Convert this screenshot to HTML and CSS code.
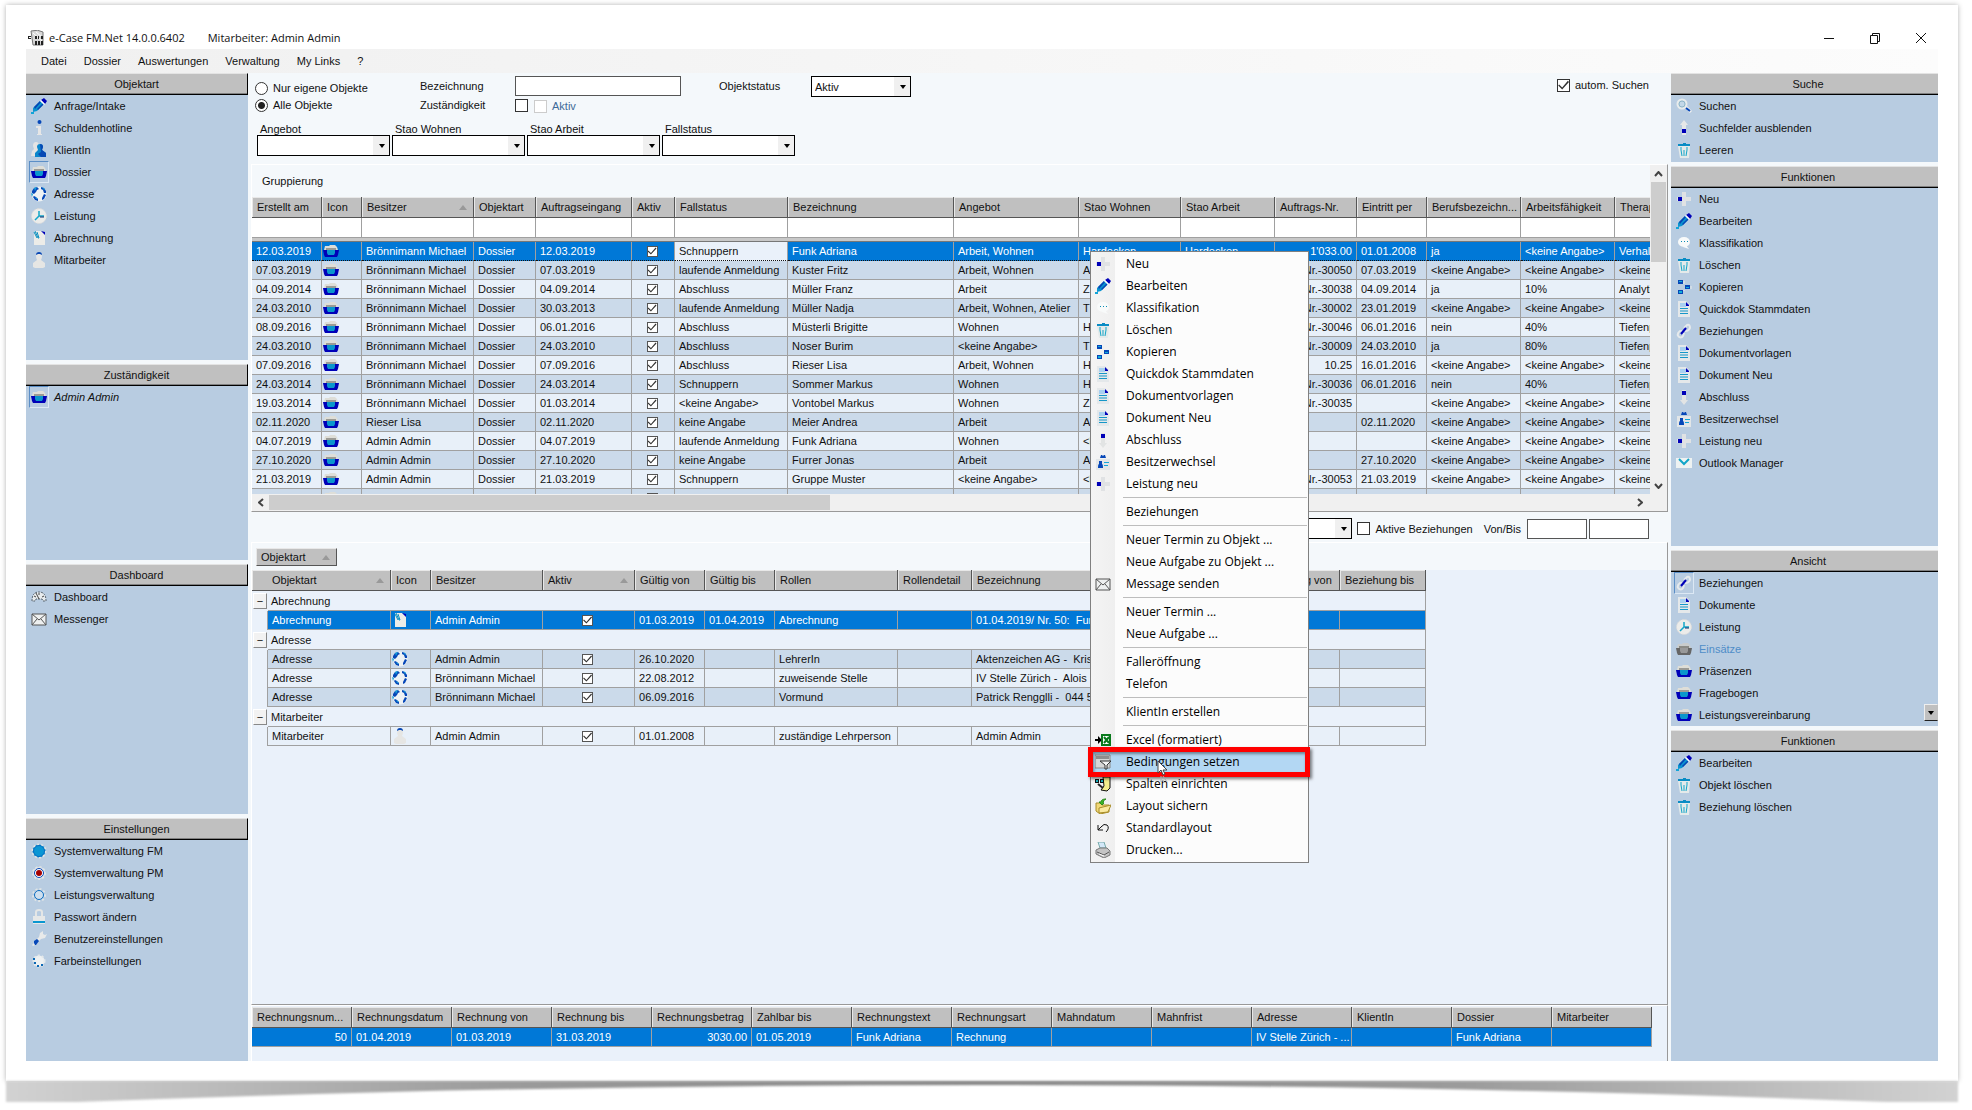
FILE: index.html
```html
<!DOCTYPE html>
<html lang="de">
<head>
<meta charset="utf-8">
<title>e-Case FM.Net</title>
<link rel="stylesheet" href="styles.css">
</head>
<body>
<svg class="sprite" aria-hidden="true">
  <symbol id="pencil" viewBox="0 0 16 16"><path d="M2 10 9 3l4 3-7 7-4 1z" fill="#0a94d0"/><path d="M3 9 9 3l1 1-6 7zM7 12l6-6-1-1-6 6z" fill="#0646b4"/><path d="M10 2l3-2 3 3-2 3z" fill="#0000b8"/><path d="M9 3l1-1 4 4-1 1z" fill="#fff"/><path d="M0 14h3v2H0z" fill="#12a5d8"/></symbol>
  <symbol id="info" viewBox="0 0 16 16"><circle cx="8.500" cy="2" r="2" fill="#0647b8"/><path d="M5 6h5v8h1v1H6v-1h1V8H5z" fill="#e6e6e6"/></symbol>
  <symbol id="client" viewBox="0 0 16 16"><path d="M2 4q0-4 3-4t3 4l-1 4 2 6H0l1-5 2-2z" fill="#e4e4e4"/><path d="M6 5q0-3 3-3t3 3l-1 3 4 3v4H4v-4l3-3z" fill="#0a86cc"/><path d="M9 2q3 0 3 3l-1 3 4 3v4h-5l-3-3 3-2z" fill="#0648b4"/></symbol>
  <symbol id="folder" viewBox="0 0 16 16"><path d="M1 7l1-4h4l1-1h5l2 2 1 3z" fill="#deded8"/><path d="M3 5h10v3H3z" fill="#9b9b96"/><path d="M0 7h16l-1 5-1 2H2l-1-2z" fill="#0000b8"/><path d="M4 7h8v3l-1 2H5l-1-2z" fill="#0a96cc"/></symbol>
  <symbol id="folder-off" viewBox="0 0 16 16"><path d="M1 7l1-4h4l1-1h5l2 2 1 3z" fill="#c9cccc"/><path d="M3 5h10v3H3z" fill="#8b8b86"/><path d="M0 7h16l-1 5-1 2H2l-1-2z" fill="#666"/><path d="M4 7h8v3l-1 2H5l-1-2z" fill="#999"/></symbol>
  <symbol id="globe" viewBox="0 0 16 16"><circle cx="8" cy="8" r="7.500" fill="#eef2f4"/><path d="M1 5l2-3 3-1 2 2-2 1-1 2-2 2-2-1zM10 1l3 1 2 3 0 2-2 0-1-3-2-1zM3 10l2 1 2 2 0 2-3-1-2-3zM13 8l2 1-2 4-2 1 0-2z" fill="#0647b8"/><path d="M3 2l3-1-2 4zM11 1l3 2-1 1zM4 11l3 2-2 0zM0 7l2 1-1 3z" fill="#12a0d8"/></symbol>
  <symbol id="clock" viewBox="0 0 16 16"><circle cx="8" cy="8" r="7.500" fill="#ececea" stroke="#dadada" stroke-dasharray="2 1"/><path d="M8 3v5h5M8 8l-4 4" fill="none" stroke="#12a5c8" stroke-width="1.500"/><path d="M9 9h4" stroke="#0b2a70"/></symbol>
  <symbol id="bill" viewBox="0 0 16 16"><path d="M3 1h7l4 3v11H3z" fill="#ecece8"/><path d="M10 1l4 1v3z" fill="#0000b8"/><path d="M4 1l3 7 1 0-2-6M3 2l3 6" fill="none" stroke="#0a8fc0"/></symbol>
  <symbol id="person" viewBox="0 0 16 16"><path d="M5 4q0-4 3-4t3 4q0 2-1 4l4 3v4l-2 1H4l-2-1v-4l4-3q-1-2-1-4z" fill="#e6e6e4"/><path d="M5 3q0-3 3-3t3 3L9 2H7z" fill="#0646b4"/></symbol>
  <symbol id="gauge" viewBox="0 0 16 16"><path d="M1 12q0-9 7-9t7 9h-3l-1-2H5l-1 2z" fill="#e8ecee" stroke="#53606c" stroke-dasharray="2 1"/><path d="M8 10L5 4M8 4v2M3 7l2 1M13 7l-2 1" stroke="#444" fill="none"/></symbol>
  <symbol id="mail" viewBox="0 0 16 16"><path d="M1 3h14v11H1z" fill="#eef0f0" stroke="#555"/><path d="M1 3l7 6 7-6M1 14l5-6M15 14l-5-6" fill="none" stroke="#555"/></symbol>
  <symbol id="gear" viewBox="0 0 16 16"><circle cx="8" cy="8" r="6.500" fill="#0a96d4" stroke="#e0e4e4" stroke-width="2" stroke-dasharray="2 2"/><circle cx="8" cy="8" r="5.500" fill="#0a96d4" stroke="#0a6cc0"/></symbol>
  <symbol id="gear-red" viewBox="0 0 16 16"><circle cx="8" cy="8" r="6" fill="#e4e8ea" stroke="#e0e4e4" stroke-width="2" stroke-dasharray="2 2"/><circle cx="8" cy="8" r="4.500" fill="#fff" stroke="#0647b8"/><circle cx="8" cy="8" r="3" fill="#a40000"/></symbol>
  <symbol id="gear-ring" viewBox="0 0 16 16"><circle cx="8" cy="8" r="6" fill="none" stroke="#dfe4e6" stroke-width="2" stroke-dasharray="2 2"/><circle cx="8" cy="8" r="4.500" fill="#cfdfee" stroke="#0b6cc0"/></symbol>
  <symbol id="lock" viewBox="0 0 16 16"><path d="M5 7V3q0-2 3-2t3 2v4" fill="none" stroke="#e4e6e6" stroke-width="2"/><path d="M2 7h12v8H2z" fill="#e6e8e8"/><path d="M2 12h12v2H2z" fill="#0a96d0"/></symbol>
  <symbol id="wrench" viewBox="0 0 16 16"><path d="M8 6l1-4 3-2 0 3 2 1 2-1-2 4-4 1-2 2-2-2z" fill="#e8eaea"/><path d="M3 10l3-2 2 2-3 4H3z" fill="#0647b8"/><path d="M1 14l2-2 1 2-2 1z" fill="#e8eaea"/></symbol>
  <symbol id="colors" viewBox="0 0 16 16"><circle cx="8" cy="8" r="5.500" fill="#eef1f2" stroke="#e4e8ea" stroke-width="2" stroke-dasharray="2 2"/><path d="M2 5h2v2H2zM3 9h2v2H3zM6 12h2v2H6zM10 11h2v2h-2z" fill="#0b68b4"/></symbol>
  <symbol id="search" viewBox="0 0 16 16"><circle cx="6" cy="6" r="4.500" fill="#c3d8e8" stroke="#e8ecec" stroke-width="2"/><circle cx="6" cy="6" r="3" fill="none" stroke="#8fb6c8"/><path d="M10 9l5 5" stroke="#eee" stroke-width="3"/><path d="M10 10l4 3" stroke="#0647b8" stroke-width="2"/></symbol>
  <symbol id="up" viewBox="0 0 16 16"><path d="M8 0l4 5h-2v10H6V5H4z" fill="#e6e8e8"/><path d="M6 9h4v4H6z" fill="#0000b8"/></symbol>
  <symbol id="down" viewBox="0 0 16 16"><path d="M8 16l4-5h-2V1H6v10H4z" fill="#e2e4e4"/><path d="M6 2h4v4H6z" fill="#0000b8"/></symbol>
  <symbol id="trash" viewBox="0 0 16 16"><path d="M2 4h12l-1 12H4z" fill="#e4eaea"/><path d="M2 2h12v2H2zM7 1h3v1H7z" fill="#0a8cc4"/><path d="M5 5v3l1 6M8 8v6M11 5v3l-1 6" fill="none" stroke="#12a5c8"/></symbol>
  <symbol id="plus" viewBox="0 0 16 16"><path d="M6 1h4v5h5v4h-5v5H6v-5H1V6h5z" fill="#e0e2e4"/><path d="M2 6h4v4H2z" fill="#0000b8"/></symbol>
  <symbol id="chat" viewBox="0 0 16 16"><ellipse cx="8" cy="7" rx="6" ry="5" fill="#f8fafa"/><path d="M10 10l3 4-6-2z" fill="#f8fafa"/><path d="M5 6h1v1H5zM8 6h1v1H8zM11 6h1v1h-1z" fill="#0a8cb4"/></symbol>
  <symbol id="copy" viewBox="0 0 16 16"><path d="M2 1h5v4H2zM2 11h5v4H2zM9 6h5v4H9z" fill="#0647b8"/><path d="M3 2h3v1H3zM3 12h3v2H3zM10 8h3v1h-3z" fill="#12b0d8"/><path d="M8 2v3M8 12v-1M15 7v3" stroke="#e8ecec"/></symbol>
  <symbol id="doc" viewBox="0 0 16 16"><path d="M2 0h8l4 4v12H2z" fill="#e4e8ea"/><path d="M4 2h6v4H4z" fill="#a8d0f0"/><path d="M10 1l3 3v1h-3z" fill="#0000b8"/><path d="M4 7.500h8M4 10h8M4 12.500h8" stroke="#1597c8"/></symbol>
  <symbol id="link" viewBox="0 0 16 16"><path d="M2 13q-1-3 2-5l2 0M9 8q4 0 5-3 0-4-3-3L8 5M2 13q3 3 5 0l1-3" fill="none" stroke="#e6eaec" stroke-width="2"/><path d="M5 11l5-6" stroke="#0000b8" stroke-width="2"/></symbol>
  <symbol id="badge" viewBox="0 0 16 16"><path d="M1 5h14v11H1z" fill="#e2e6e8"/><path d="M5 4l1-3h1l1 1 1-1h1l1 3zM3 13q0-3 1-3v-3h3v3q1 0 1 3v1H3z" fill="#0647b8"/><path d="M9 8h5v1H9zM9 11h4v1H9z" fill="#12a5d8"/></symbol>
  <symbol id="outlook" viewBox="0 0 16 16"><path d="M0 3h16v10H0z" fill="#eef2f2"/><path d="M3 4l5 5 5-5" fill="none" stroke="#12a5c8" stroke-width="2"/></symbol>
  <symbol id="excel" viewBox="0 0 16 16"><path d="M0 7h3V4l4 4-4 4V9H0z" fill="#000"/><path d="M7 3h8v10H7z" fill="#fff" stroke="#0a7a1c" stroke-width="2"/><path d="M9 5l5 6M14 5l-5 6" stroke="#0a7a1c" stroke-width="2"/></symbol>
  <symbol id="filter" viewBox="0 0 16 16"><path d="M0 1h15v13H0z" fill="#d6d6d6" stroke="#888"/><path d="M1 2h13v3H1z" fill="#8e8e8e"/><path d="M5 7h11l-4 4v4h-2v-4z" fill="#f4f4f4" stroke="#333"/></symbol>
  <symbol id="columns" viewBox="0 0 16 16"><path d="M8 1h7v11l-3 3-6-1 3-4z" fill="#f3ee8c" stroke="#111"/><path d="M0 3h4v4H0zM5 3h4v4H5z" fill="#111"/><path d="M1 4h2v2H1zM6 4h2v2H6z" fill="#19b4c4"/><path d="M3 8l5 4" stroke="#222" stroke-width="2"/></symbol>
  <symbol id="save" viewBox="0 0 16 16"><path d="M1 5h5l1 2h7v7l-9 2-4-3z" fill="#f0d878" stroke="#a88c28"/><path d="M4 10l12-3-3 7-9 1z" fill="#fbeaa0" stroke="#a88c28"/><path d="M4 4l3 3 2-2-1 0q0-3 3-4-5 0-5 3z" fill="#3cb828" stroke="#2a8c1c"/></symbol>
  <symbol id="undo" viewBox="0 0 16 16"><path d="M3 5v5h5M3 10l4-4" fill="none" stroke="#111"/><path d="M6 7q3-4 6-2 3 3-1 7" fill="none" stroke="#111"/></symbol>
  <symbol id="print" viewBox="0 0 16 16"><path d="M3 0h6l2 6H5z" fill="#d4e8f8" stroke="#7aa"/><path d="M1 8l4-2h7l3 3v4l-6 3-8-4z" fill="#c4c4c4" stroke="#777"/><path d="M2 10l7 3 5-3" fill="none" stroke="#555"/><path d="M4 12l5 2" stroke="#fff"/></symbol>
  <symbol id="app" viewBox="0 0 16 16"><path d="M3 1q7-2 12 1v13H5z" fill="#d8d8d8" stroke="#777"/><path d="M8 2l6 5M5 3l9 8" stroke="#fff"/><path d="M0 6h3v1H1v1h2v1H0zM4 8h2M7 6h2v3H7zM10 6h1v3h-1zM13 6h2v3h-2zM7 11h2v4H7zM10 11h2v4h-2zM13 11h2v4h-2z" fill="#222"/></symbol>
</svg>

<main class="paper">
  <header class="titlebar">
    <svg class="ic"><use href="#app"/></svg>
    <span class="app-name">e-Case FM.Net 14.0.0.6402</span>
    <span>Mitarbeiter: Admin Admin</span>
    <div class="winbtns">
      <button type="button" aria-label="Minimieren"><svg viewBox="0 0 12 12"><path d="M1 6.500h10"/></svg></button>
      <button type="button" aria-label="Verkleinern"><svg viewBox="0 0 12 12"><path d="M1.500 3.500h7v8h-7zM3.500 3.500v-2h7v8h-2"/></svg></button>
      <button type="button" aria-label="Schliessen"><svg viewBox="0 0 12 12"><path d="M1 1l10 10M11 1L1 11"/></svg></button>
    </div>
  </header>
  <nav class="menubar">
    <button type="button">Datei</button><button type="button">Dossier</button><button type="button">Auswertungen</button><button type="button">Verwaltung</button><button type="button">My Links</button><button type="button">?</button>
  </nav>

  <div class="workspace">
    <aside class="side side-left">
      <section class="panel">
        <h2>Objektart</h2>
        <button type="button"><svg class="ic"><use href="#pencil"/></svg>Anfrage/Intake</button>
        <button type="button"><svg class="ic"><use href="#info"/></svg>Schuldenhotline</button>
        <button type="button"><svg class="ic"><use href="#client"/></svg>KlientIn</button>
        <button type="button" class="current"><svg class="ic"><use href="#folder"/></svg>Dossier</button>
        <button type="button"><svg class="ic"><use href="#globe"/></svg>Adresse</button>
        <button type="button"><svg class="ic"><use href="#clock"/></svg>Leistung</button>
        <button type="button"><svg class="ic"><use href="#bill"/></svg>Abrechnung</button>
        <button type="button"><svg class="ic"><use href="#person"/></svg>Mitarbeiter</button>
      </section>
      <section class="panel">
        <h2>Zuständigkeit</h2>
        <button type="button" class="current"><svg class="ic"><use href="#folder"/></svg><em>Admin Admin</em></button>
      </section>
      <section class="panel">
        <h2>Dashboard</h2>
        <button type="button"><svg class="ic"><use href="#gauge"/></svg>Dashboard</button>
        <button type="button"><svg class="ic"><use href="#mail"/></svg>Messenger</button>
      </section>
      <section class="panel">
        <h2>Einstellungen</h2>
        <button type="button"><svg class="ic"><use href="#gear"/></svg>Systemverwaltung FM</button>
        <button type="button"><svg class="ic"><use href="#gear-red"/></svg>Systemverwaltung PM</button>
        <button type="button"><svg class="ic"><use href="#gear-ring"/></svg>Leistungsverwaltung</button>
        <button type="button"><svg class="ic"><use href="#lock"/></svg>Passwort ändern</button>
        <button type="button"><svg class="ic"><use href="#wrench"/></svg>Benutzereinstellungen</button>
        <button type="button"><svg class="ic"><use href="#colors"/></svg>Farbeinstellungen</button>
      </section>
    </aside>

    <div class="center">
      <form class="filters">
        <div class="filter-top">
          <div class="stack owner">
            <label><input type="radio" name="own">Nur eigene Objekte</label>
            <label><input type="radio" name="own" checked>Alle Objekte</label>
          </div>
          <div class="stack names">
            <label for="bez">Bezeichnung</label>
            <label for="zust">Zuständigkeit</label>
          </div>
          <div class="stack values">
            <input type="text" id="bez">
            <div class="checks"><input type="checkbox" id="zust"><label class="off"><input type="checkbox" disabled>Aktiv</label></div>
          </div>
          <label class="status" for="status">Objektstatus</label>
          <span class="sel sel-status"><select id="status"><option>Aktiv</option></select></span>
          <label class="auto"><input type="checkbox" checked>autom. Suchen</label>
        </div>
        <div class="filter-bottom">
          <div><label for="f1">Angebot</label><span class="sel"><select id="f1"><option></option></select></span></div>
          <div><label for="f2">Stao Wohnen</label><span class="sel"><select id="f2"><option></option></select></span></div>
          <div><label for="f3">Stao Arbeit</label><span class="sel"><select id="f3"><option></option></select></span></div>
          <div><label for="f4">Fallstatus</label><span class="sel"><select id="f4"><option></option></select></span></div>
        </div>
      </form>

      <section class="list main-list">
        <div class="list-body">
          <div class="grouping">Gruppierung</div>
          <table class="grid cases">
            <thead>
              <tr><th>Erstellt am</th><th>Icon</th><th class="sorted">Besitzer</th><th>Objektart</th><th>Auftragseingang</th><th>Aktiv</th><th>Fallstatus</th><th>Bezeichnung</th><th>Angebot</th><th>Stao Wohnen</th><th>Stao Arbeit</th><th>Auftrags-Nr.</th><th>Eintritt per</th><th>Berufsbezeichn...</th><th>Arbeitsfähigkeit</th><th>Therapie</th></tr>
              <tr class="search"><td></td><td></td><td></td><td></td><td></td><td></td><td></td><td></td><td></td><td></td><td></td><td></td><td></td><td></td><td></td><td></td></tr>
              <tr class="divider"><td colspan="16"></td></tr>
            </thead>
            <tbody>
              <tr class="selected"><td>12.03.2019</td><td class="pic"><svg class="ic"><use href="#folder"/></svg></td><td>Brönnimann Michael</td><td>Dossier</td><td>12.03.2019</td><td class="mid"><input type="checkbox" aria-label="Aktiv" checked></td><td class="focus">Schnuppern</td><td>Funk Adriana</td><td>Arbeit, Wohnen</td><td>Hardecken</td><td>Hardecken</td><td class="num">1'033.00</td><td>01.01.2008</td><td>ja</td><td>&lt;keine Angabe&gt;</td><td>Verhaltens</td></tr>
              <tr><td>07.03.2019</td><td class="pic"><svg class="ic"><use href="#folder"/></svg></td><td>Brönnimann Michael</td><td>Dossier</td><td>07.03.2019</td><td class="mid"><input type="checkbox" aria-label="Aktiv" checked></td><td>laufende Anmeldung</td><td>Kuster Fritz</td><td>Arbeit, Wohnen</td><td>A</td><td></td><td class="num">Nr.-30050</td><td>07.03.2019</td><td>&lt;keine Angabe&gt;</td><td>&lt;keine Angabe&gt;</td><td>&lt;keine Angabe&gt;</td></tr>
              <tr><td>04.09.2014</td><td class="pic"><svg class="ic"><use href="#folder"/></svg></td><td>Brönnimann Michael</td><td>Dossier</td><td>04.09.2014</td><td class="mid"><input type="checkbox" aria-label="Aktiv" checked></td><td>Abschluss</td><td>Müller Franz</td><td>Arbeit</td><td>Z</td><td></td><td class="num">Nr.-30038</td><td>04.09.2014</td><td>ja</td><td>10%</td><td>Analytisch</td></tr>
              <tr><td>24.03.2010</td><td class="pic"><svg class="ic"><use href="#folder"/></svg></td><td>Brönnimann Michael</td><td>Dossier</td><td>30.03.2013</td><td class="mid"><input type="checkbox" aria-label="Aktiv" checked></td><td>laufende Anmeldung</td><td>Müller Nadja</td><td>Arbeit, Wohnen, Atelier</td><td>T</td><td></td><td class="num">Nr.-30002</td><td>23.01.2019</td><td>&lt;keine Angabe&gt;</td><td>&lt;keine Angabe&gt;</td><td>&lt;keine Angabe&gt;</td></tr>
              <tr><td>08.09.2016</td><td class="pic"><svg class="ic"><use href="#folder"/></svg></td><td>Brönnimann Michael</td><td>Dossier</td><td>06.01.2016</td><td class="mid"><input type="checkbox" aria-label="Aktiv" checked></td><td>Abschluss</td><td>Müsterli Brigitte</td><td>Wohnen</td><td>H</td><td></td><td class="num">Nr.-30046</td><td>06.01.2016</td><td>nein</td><td>40%</td><td>Tiefenpsych</td></tr>
              <tr><td>24.03.2010</td><td class="pic"><svg class="ic"><use href="#folder"/></svg></td><td>Brönnimann Michael</td><td>Dossier</td><td>24.03.2010</td><td class="mid"><input type="checkbox" aria-label="Aktiv" checked></td><td>Abschluss</td><td>Noser Burim</td><td>&lt;keine Angabe&gt;</td><td>T</td><td></td><td class="num">Nr.-30009</td><td>24.03.2010</td><td>ja</td><td>80%</td><td>Tiefenpsych</td></tr>
              <tr><td>07.09.2016</td><td class="pic"><svg class="ic"><use href="#folder"/></svg></td><td>Brönnimann Michael</td><td>Dossier</td><td>07.09.2016</td><td class="mid"><input type="checkbox" aria-label="Aktiv" checked></td><td>Abschluss</td><td>Rieser Lisa</td><td>Arbeit, Wohnen</td><td>H</td><td></td><td class="num">10.25</td><td>16.01.2016</td><td>&lt;keine Angabe&gt;</td><td>&lt;keine Angabe&gt;</td><td>&lt;keine Angabe&gt;</td></tr>
              <tr><td>24.03.2014</td><td class="pic"><svg class="ic"><use href="#folder"/></svg></td><td>Brönnimann Michael</td><td>Dossier</td><td>24.03.2014</td><td class="mid"><input type="checkbox" aria-label="Aktiv" checked></td><td>Schnuppern</td><td>Sommer Markus</td><td>Wohnen</td><td>H</td><td></td><td class="num">Nr.-30036</td><td>06.01.2016</td><td>nein</td><td>40%</td><td>Tiefenpsych</td></tr>
              <tr><td>19.03.2014</td><td class="pic"><svg class="ic"><use href="#folder"/></svg></td><td>Brönnimann Michael</td><td>Dossier</td><td>01.03.2014</td><td class="mid"><input type="checkbox" aria-label="Aktiv" checked></td><td>&lt;keine Angabe&gt;</td><td>Vontobel Markus</td><td>Wohnen</td><td>Z</td><td></td><td class="num">Nr.-30035</td><td></td><td>&lt;keine Angabe&gt;</td><td>&lt;keine Angabe&gt;</td><td>&lt;keine Angabe&gt;</td></tr>
              <tr><td>02.11.2020</td><td class="pic"><svg class="ic"><use href="#folder"/></svg></td><td>Rieser Lisa</td><td>Dossier</td><td>02.11.2020</td><td class="mid"><input type="checkbox" aria-label="Aktiv" checked></td><td>keine Angabe</td><td>Meier Andrea</td><td>Arbeit</td><td>A</td><td></td><td></td><td>02.11.2020</td><td>&lt;keine Angabe&gt;</td><td>&lt;keine Angabe&gt;</td><td>&lt;keine Angabe&gt;</td></tr>
              <tr><td>04.07.2019</td><td class="pic"><svg class="ic"><use href="#folder"/></svg></td><td>Admin Admin</td><td>Dossier</td><td>04.07.2019</td><td class="mid"><input type="checkbox" aria-label="Aktiv" checked></td><td>laufende Anmeldung</td><td>Funk Adriana</td><td>Wohnen</td><td>&lt;k</td><td></td><td></td><td></td><td>&lt;keine Angabe&gt;</td><td>&lt;keine Angabe&gt;</td><td>&lt;keine Angabe&gt;</td></tr>
              <tr><td>27.10.2020</td><td class="pic"><svg class="ic"><use href="#folder"/></svg></td><td>Admin Admin</td><td>Dossier</td><td>27.10.2020</td><td class="mid"><input type="checkbox" aria-label="Aktiv" checked></td><td>keine Angabe</td><td>Furrer Jonas</td><td>Arbeit</td><td>A</td><td></td><td></td><td>27.10.2020</td><td>&lt;keine Angabe&gt;</td><td>&lt;keine Angabe&gt;</td><td>&lt;keine Angabe&gt;</td></tr>
              <tr><td>21.03.2019</td><td class="pic"><svg class="ic"><use href="#folder"/></svg></td><td>Admin Admin</td><td>Dossier</td><td>21.03.2019</td><td class="mid"><input type="checkbox" aria-label="Aktiv" checked></td><td>Schnuppern</td><td>Gruppe Muster</td><td>&lt;keine Angabe&gt;</td><td>&lt;k</td><td></td><td class="num">Nr.-30053</td><td>21.03.2019</td><td>&lt;keine Angabe&gt;</td><td>&lt;keine Angabe&gt;</td><td>&lt;keine Angabe&gt;</td></tr>
              <tr><td>07.03.2019</td><td class="pic"><svg class="ic"><use href="#folder"/></svg></td><td>Admin Admin</td><td>Dossier</td><td>07.03.2019</td><td class="mid"><input type="checkbox" aria-label="Aktiv" checked></td><td>laufende Anmeldung</td><td>Kunger Fridolin</td><td>Wohnen</td><td>A</td><td></td><td class="num">Nr.-30033</td><td></td><td>&lt;keine Angabe&gt;</td><td>&lt;keine Angabe&gt;</td><td>&lt;keine Angabe&gt;</td></tr>
            </tbody>
          </table>
        </div>
        <div class="vbar"><svg viewBox="0 0 9 6"><path d="M1 5l3.500-4L8 5"/></svg><i></i><svg viewBox="0 0 9 6"><path d="M1 1l3.500 4L8 1"/></svg></div>
        <div class="hbar"><svg viewBox="0 0 6 9"><path d="M5 1L1 4.500 5 8"/></svg><i></i><svg viewBox="0 0 6 9"><path d="M1 1l4 3.500L1 8"/></svg></div>
      </section>

      <div class="relbar">
        <span class="sel"><select aria-label="Rolle"><option></option></select></span>
        <label><input type="checkbox">Aktive Beziehungen</label>
        <label class="range" for="von">Von/Bis</label>
        <input type="text" id="von"><input type="text" aria-label="Bis">
      </div>

      <section class="list rel-list">
        <div class="chips"><button type="button">Objektart</button></div>
        <table class="grid relations">
          <colgroup><col><col><col><col><col><col><col><col><col><col><col><col></colgroup>
          <thead><tr><th colspan="2" class="sorted first">Objektart</th><th>Icon</th><th>Besitzer</th><th class="sorted">Aktiv</th><th>Gültig von</th><th>Gültig bis</th><th>Rollen</th><th>Rollendetail</th><th>Bezeichnung</th><th>Beziehung von</th><th>Beziehung bis</th></tr></thead>
          <tbody>
            <tr class="group"><td class="exp"><button type="button">−</button></td><td colspan="11">Abrechnung</td></tr>
            <tr class="selected"><td class="exp"></td><td>Abrechnung</td><td class="pic"><svg class="ic"><use href="#bill"/></svg></td><td>Admin Admin</td><td class="mid"><input type="checkbox" aria-label="Aktiv" checked></td><td>01.03.2019</td><td>01.04.2019</td><td>Abrechnung</td><td></td><td>01.04.2019/ Nr. 50:&nbsp; Funk Adriana</td><td></td><td></td></tr>
            <tr class="group"><td class="exp"><button type="button">−</button></td><td colspan="11">Adresse</td></tr>
            <tr class="alt"><td class="exp"></td><td>Adresse</td><td class="pic"><svg class="ic"><use href="#globe"/></svg></td><td>Admin Admin</td><td class="mid"><input type="checkbox" aria-label="Aktiv" checked></td><td>26.10.2020</td><td></td><td>LehrerIn</td><td></td><td>Aktenzeichen AG -&nbsp; Krist</td><td></td><td></td></tr>
            <tr><td class="exp"></td><td>Adresse</td><td class="pic"><svg class="ic"><use href="#globe"/></svg></td><td>Brönnimann Michael</td><td class="mid"><input type="checkbox" aria-label="Aktiv" checked></td><td>22.08.2012</td><td></td><td>zuweisende Stelle</td><td></td><td>IV Stelle Zürich -&nbsp; Alois B</td><td></td><td></td></tr>
            <tr class="alt"><td class="exp"></td><td>Adresse</td><td class="pic"><svg class="ic"><use href="#globe"/></svg></td><td>Brönnimann Michael</td><td class="mid"><input type="checkbox" aria-label="Aktiv" checked></td><td>06.09.2016</td><td></td><td>Vormund</td><td></td><td>Patrick Rengglli -&nbsp; 044 54</td><td></td><td></td></tr>
            <tr class="group"><td class="exp"><button type="button">−</button></td><td colspan="11">Mitarbeiter</td></tr>
            <tr><td class="exp"></td><td>Mitarbeiter</td><td class="pic"><svg class="ic"><use href="#person"/></svg></td><td>Admin Admin</td><td class="mid"><input type="checkbox" aria-label="Aktiv" checked></td><td>01.01.2008</td><td></td><td>zuständige Lehrperson</td><td></td><td>Admin Admin</td><td></td><td></td></tr>
          </tbody>
        </table>
      </section>

      <section class="list bill-list">
        <table class="grid bills">
          <thead><tr><th>Rechnungsnum...</th><th>Rechnungsdatum</th><th>Rechnung von</th><th>Rechnung bis</th><th>Rechnungsbetrag</th><th>Zahlbar bis</th><th>Rechnungstext</th><th>Rechnungsart</th><th>Mahndatum</th><th>Mahnfrist</th><th>Adresse</th><th>KlientIn</th><th>Dossier</th><th>Mitarbeiter</th></tr></thead>
          <tbody><tr class="selected"><td class="num">50</td><td>01.04.2019</td><td>01.03.2019</td><td>31.03.2019</td><td class="num">3030.00</td><td>01.05.2019</td><td>Funk Adriana</td><td>Rechnung</td><td></td><td></td><td>IV Stelle Zürich - ...</td><td></td><td>Funk Adriana</td><td></td></tr></tbody>
        </table>
      </section>

      <div class="context">
        <button type="button"><svg class="ic"><use href="#plus"/></svg>Neu</button>
        <button type="button"><svg class="ic"><use href="#pencil"/></svg>Bearbeiten</button>
        <button type="button"><svg class="ic"><use href="#chat"/></svg>Klassifikation</button>
        <button type="button"><svg class="ic"><use href="#trash"/></svg>Löschen</button>
        <button type="button"><svg class="ic"><use href="#copy"/></svg>Kopieren</button>
        <button type="button"><svg class="ic"><use href="#doc"/></svg>Quickdok Stammdaten</button>
        <button type="button"><svg class="ic"><use href="#doc"/></svg>Dokumentvorlagen</button>
        <button type="button"><svg class="ic"><use href="#doc"/></svg>Dokument Neu</button>
        <button type="button"><svg class="ic"><use href="#down"/></svg>Abschluss</button>
        <button type="button"><svg class="ic"><use href="#badge"/></svg>Besitzerwechsel</button>
        <button type="button"><svg class="ic"><use href="#plus"/></svg>Leistung neu</button>
        <hr>
        <button type="button"><svg class="ic"></svg>Beziehungen</button>
        <hr>
        <button type="button"><svg class="ic"></svg>Neuer Termin zu Objekt ...</button>
        <button type="button"><svg class="ic"></svg>Neue Aufgabe zu Objekt ...</button>
        <button type="button"><svg class="ic"><use href="#mail"/></svg>Message senden</button>
        <hr>
        <button type="button"><svg class="ic"></svg>Neuer Termin ...</button>
        <button type="button"><svg class="ic"></svg>Neue Aufgabe ...</button>
        <hr>
        <button type="button"><svg class="ic"></svg>Falleröffnung</button>
        <button type="button"><svg class="ic"></svg>Telefon</button>
        <hr>
        <button type="button"><svg class="ic"></svg>KlientIn erstellen</button>
        <hr>
        <button type="button"><svg class="ic"><use href="#excel"/></svg>Excel (formatiert)</button>
        <button type="button" class="hot"><svg class="ic"><use href="#filter"/></svg>Bedingungen setzen
          <svg class="cursor" viewBox="0 0 12 24"><path d="M1 1v12l3-3 2 5 2-1-2-4h4z" fill="#fff" stroke="#444"/><path d="M4 16v6l2-2 1 3M6 16l4 6" fill="none" stroke="#aaa"/></svg></button>
        <button type="button"><svg class="ic"><use href="#columns"/></svg>Spalten einrichten</button>
        <button type="button"><svg class="ic"><use href="#save"/></svg>Layout sichern</button>
        <button type="button"><svg class="ic"><use href="#undo"/></svg>Standardlayout</button>
        <button type="button"><svg class="ic"><use href="#print"/></svg>Drucken...</button>
      </div>
    </div>

    <aside class="side side-right">
      <section class="panel">
        <h2>Suche</h2>
        <button type="button"><svg class="ic"><use href="#search"/></svg>Suchen</button>
        <button type="button"><svg class="ic"><use href="#up"/></svg>Suchfelder ausblenden</button>
        <button type="button"><svg class="ic"><use href="#trash"/></svg>Leeren</button>
      </section>
      <section class="panel">
        <h2>Funktionen</h2>
        <button type="button"><svg class="ic"><use href="#plus"/></svg>Neu</button>
        <button type="button"><svg class="ic"><use href="#pencil"/></svg>Bearbeiten</button>
        <button type="button"><svg class="ic"><use href="#chat"/></svg>Klassifikation</button>
        <button type="button"><svg class="ic"><use href="#trash"/></svg>Löschen</button>
        <button type="button"><svg class="ic"><use href="#copy"/></svg>Kopieren</button>
        <button type="button"><svg class="ic"><use href="#doc"/></svg>Quickdok Stammdaten</button>
        <button type="button"><svg class="ic"><use href="#link"/></svg>Beziehungen</button>
        <button type="button"><svg class="ic"><use href="#doc"/></svg>Dokumentvorlagen</button>
        <button type="button"><svg class="ic"><use href="#doc"/></svg>Dokument Neu</button>
        <button type="button"><svg class="ic"><use href="#down"/></svg>Abschluss</button>
        <button type="button"><svg class="ic"><use href="#badge"/></svg>Besitzerwechsel</button>
        <button type="button"><svg class="ic"><use href="#plus"/></svg>Leistung neu</button>
        <button type="button"><svg class="ic"><use href="#outlook"/></svg>Outlook Manager</button>
      </section>
      <section class="panel">
        <h2>Ansicht</h2>
        <button type="button" class="current"><svg class="ic"><use href="#link"/></svg>Beziehungen</button>
        <button type="button"><svg class="ic"><use href="#doc"/></svg>Dokumente</button>
        <button type="button"><svg class="ic"><use href="#clock"/></svg>Leistung</button>
        <button type="button" disabled><svg class="ic"><use href="#folder-off"/></svg>Einsätze</button>
        <button type="button"><svg class="ic"><use href="#folder"/></svg>Präsenzen</button>
        <button type="button"><svg class="ic"><use href="#folder"/></svg>Fragebogen</button>
        <button type="button"><svg class="ic"><use href="#folder"/></svg>Leistungsvereinbarung</button>
        <button type="button" class="more" aria-label="Mehr"></button>
      </section>
      <section class="panel">
        <h2>Funktionen</h2>
        <button type="button"><svg class="ic"><use href="#pencil"/></svg>Bearbeiten</button>
        <button type="button"><svg class="ic"><use href="#trash"/></svg>Objekt löschen</button>
        <button type="button"><svg class="ic"><use href="#trash"/></svg>Beziehung löschen</button>
      </section>
    </aside>
  </div>
</main>
<svg class="curl" viewBox="0 0 1952 29" preserveAspectRatio="none" aria-hidden="true">
  <defs><linearGradient id="fade"><stop offset="0" stop-color="#d2d2d2"/><stop offset=".25" stop-color="#9c9c9c"/><stop offset=".5" stop-color="#858585"/><stop offset=".75" stop-color="#9c9c9c"/><stop offset="1" stop-color="#d2d2d2"/></linearGradient></defs>
  <path d="M0-6H1952V21H1880Q1450 4 976 4T72 21H0z" fill="url(#fade)"/>
</svg>
</body>
</html>
```
FILE: styles.css
```css
* { box-sizing: border-box; }
body {
  margin: 0;
  padding: 5px 14px 0 6px;
  background: #fff;
  color: #111;
  font: 11px/14px "Liberation Sans", Arial, sans-serif;
}
button, input, select { font: inherit; color: inherit; margin: 0; }
button { border: 0; padding: 0; background: none; text-align: left; }
.sprite { display: none; }
.ic { flex: none; width: 16px; height: 16px; display: block; }

.paper {
  position: relative;
  display: flex;
  flex-direction: column;
  height: calc(100vh - 34px);
  min-height: 900px;
  padding: 15px 20px 20px;
  background: #fff;
  box-shadow: 0 0 5px rgba(0, 0, 0, .3);
}
.curl { display: block; width: 100%; height: 29px; filter: blur(1px); }

/* window frame */
.titlebar {
  display: flex;
  align-items: center;
  height: 29px;
  padding: 6px 0 0 2px;
  gap: 5px;
  font: 11px/16px "Open Sans", "Noto Sans", sans-serif;
}
.app-name { margin-right: 18px; }
.winbtns { display: flex; gap: 34px; margin-left: auto; padding-right: 11px; }
.winbtns svg { display: block; width: 12px; height: 12px; fill: none; stroke: #111; }
.menubar {
  display: flex;
  align-items: center;
  gap: 17px;
  height: 24px;
  padding-left: 15px;
  background: linear-gradient(90deg, #f0f0f0, #fcfcfc);
}
.workspace {
  flex: 1;
  min-height: 0;
  display: grid;
  grid-template-columns: 222px minmax(0, 1fr) 267px;
  gap: 3px;
  background: #f4f8fb;
}

/* side panels */
.side { display: grid; gap: 4px; min-height: 0; }
.side-left { grid-template-rows: 287fr 196fr 250fr 243fr; }
.side-right { grid-template-rows: 89fr 380fr 176fr 331fr; }
.panel { position: relative; background: #b8cce1; min-height: 0; overflow: hidden; }
.panel h2 {
  height: 22px;
  margin: 0;
  background: #c0c0c0;
  border-top: 1px solid #e3e3e3;
  border-bottom: 1px solid #000;
  box-shadow: inset 0 -1px #808080;
  font-size: 11px;
  font-weight: normal;
  line-height: 20px;
  text-align: center;
}
.side-left h2 { border-right: 1px solid #000; }
.side-right h2 { padding-left: 7px; }
.panel button {
  display: flex;
  align-items: center;
  gap: 5px;
  width: 100%;
  height: 22px;
  padding-left: 3px;
}
.panel .ic { width: 20px; height: 22px; padding: 2px; }
.panel .current .ic { border: 1px solid; border-color: #5b8ec6 #dce8f4 #dce8f4 #5b8ec6; padding: 2px 1px; }
.panel button:disabled { color: #4f8cc8; }
.panel .more {
  position: absolute;
  right: 0;
  bottom: 5px;
  width: 14px;
  height: 17px;
  padding: 0;
  justify-content: center;
  background: #c0c0c0;
  border: 1px solid;
  border-color: #eee transparent #222 #eee;
}
.more::after, .sel::after {
  content: "";
  border: 3px solid transparent;
  border-top: 4px solid #000;
  border-bottom: 0;
}

/* form controls */
input[type=text] { height: 20px; border: 1px solid #555; background: #fff; padding: 0 3px; border-radius: 0; }
input[type=checkbox], input[type=radio] {
  appearance: none;
  flex: none;
  width: 13px;
  height: 13px;
  background: #fff;
  border: 1px solid #333;
}
input[type=radio] { border-radius: 50%; }
input[type=radio]:checked { background: radial-gradient(circle, #222 3px, #fff 4px); }
input[type=checkbox]:disabled { border-color: #ccc; }
input[type=checkbox]:checked::before {
  content: "";
  display: block;
  width: 11px;
  height: 11px;
  background: #333;
  clip-path: polygon(10% 45%, 38% 72%, 90% 12%, 100% 22%, 38% 90%, 2% 55%);
}
.sel { position: relative; display: block; height: 21px; }
.sel select {
  appearance: none;
  display: block;
  width: 100%;
  height: 100%;
  padding: 0 20px 0 3px;
  border: 1px solid #000;
  border-radius: 0;
  background: linear-gradient(#f0f0f0, #f0f0f0) right / 16px 100% no-repeat #fff;
}
.sel::after { position: absolute; right: 5px; top: 9px; }

/* search area */
.center {
  position: relative;
  display: grid;
  grid-template-rows: 91px minmax(0, 348fr) 30px minmax(0, 463fr) 56px;
  min-height: 0;
}
.filters { display: flex; flex-direction: column; justify-content: space-between; padding: 3px 19px 8px 6px; }
.filter-top { display: flex; align-items: flex-start; }
.filter-top label { display: flex; align-items: center; gap: 5px; }
.stack { display: flex; flex-direction: column; gap: 3px; }
.owner { width: 165px; margin-left: -2px; padding-top: 5px; }
.names { width: 95px; padding-top: 3px; gap: 5px; }
.values { width: 204px; }
.values input[type=text] { width: 166px; }
.checks { display: flex; gap: 6px; }
.off { color: #3d6a98; }
.filter-top .status { width: 92px; padding-top: 3px; }
.sel-status { width: 100px; }
.filter-top .auto { margin-left: auto; padding-top: 2px; }
.filter-bottom { display: flex; gap: 2px; }
.filter-bottom div { width: 133px; }
.filter-bottom label { display: block; height: 13px; padding-left: 3px; }

/* lists */
.list { border-right: 1px solid #999; border-top: 1px solid #fff; border-left: 1px solid #fff; min-height: 0; overflow: hidden; }
.main-list { display: grid; grid-template: minmax(0, 1fr) 17px / minmax(0, 1fr) 17px; border-bottom: 1px solid #999; }
.list-body { overflow: hidden; }
.grouping { height: 32px; padding-left: 10px; line-height: 32px; }
.vbar, .hbar { display: flex; align-items: center; justify-content: space-between; background: #f0f0f0; }
.vbar { flex-direction: column; padding: 6px 0 5px; }
.vbar i { width: 15px; height: 80px; margin: 5px 0 auto; background: #cdcdcd; }
.hbar { grid-column: 1 / -1; padding: 0 24px 0 6px; }
.hbar i { width: 561px; height: 15px; margin: 0 auto 0 5px; background: #cdcdcd; }
.vbar svg { width: 9px; height: 6px; }
.hbar svg { width: 6px; height: 9px; }
.vbar svg, .hbar svg { fill: none; stroke: #444; stroke-width: 2; }

.grid { table-layout: fixed; border-spacing: 0; width: 1px; }
.grid th, .grid td { padding: 0 0 0 4px; overflow: hidden; white-space: nowrap; text-align: left; font-weight: normal; }
.grid th {
  height: 21px;
  background: #c0c0c0;
  border-right: 1px solid #555;
  border-bottom: 1px solid #555;
  box-shadow: inset 1px 1px #e8e8e8;
  padding-left: 5px;
}
.grid th.first { padding-left: 20px; }
.chips button { background: #c0c0c0; }
.sorted::after, .chips button::after {
  content: "";
  float: right;
  margin: 5px 6px 0 0;
  border: 4px solid transparent;
  border-bottom: 5px solid #999;
  border-top: 0;
}
.grid td { height: 19px; line-height: 16px; background: #e8f0f9; border-right: 1px solid #a0a0a0; border-bottom: 1px solid #a0a0a0; }
.cases tbody tr:nth-child(even) td, .grid .alt td { background: #cbdaea; }
.grid .search td { height: 20px; background: #fff; }
.grid .divider td { height: 4px; background: #c8c8c8; border: 0; border-bottom: 1px solid #777; }
.grid .selected td { background: #0078d7; color: #fff; }
.cases .selected td { border-bottom: 1px dotted #111; }
.grid .selected td.focus { background: #eaf1fa; color: #111; }
.grid td.num { text-align: right; padding-right: 4px; }
.grid td.pic { padding-left: 1px; }
.grid td.mid { text-align: center; padding: 0 2px 0 0; }
.grid td.mid input { display: block; width: 11px; height: 11px; margin: 0 auto; border-color: #555; color: #111; }
.grid td.mid input::before { width: 9px; height: 9px; }

.cases th:nth-child(1) { width: 70px; }
.cases th:nth-child(2) { width: 40px; }
.cases th:nth-child(3) { width: 112px; }
.cases th:nth-child(4) { width: 62px; }
.cases th:nth-child(5) { width: 96px; }
.cases th:nth-child(6) { width: 43px; }
.cases th:nth-child(7) { width: 113px; }
.cases th:nth-child(8) { width: 166px; }
.cases th:nth-child(9) { width: 125px; }
.cases th:nth-child(10) { width: 102px; }
.cases th:nth-child(11) { width: 94px; }
.cases th:nth-child(12) { width: 82px; }
.cases th:nth-child(13) { width: 70px; }
.cases th:nth-child(14), .cases th:nth-child(15), .cases th:nth-child(16) { width: 94px; }

.relbar { display: flex; align-items: center; justify-content: flex-end; gap: 2px; padding: 3px 19px 0 0; }
.relbar .sel { width: 133px; }
.relbar label { display: flex; align-items: center; gap: 5px; padding: 0 6px 0 3px; }
.relbar .range { padding-right: 4px; }
.relbar input[type=text] { width: 60px; }

.rel-list { background: #eaf1fa; border-bottom: 1px solid #999; }
.chips { height: 27px; padding: 5px 4px; background: #f4f8fb; }
.chips button { width: 81px; height: 18px; padding-left: 4px; border: 1px solid; border-color: #e8e8e8 #555 #555 #e8e8e8; }
.relations col:nth-child(1) { width: 16px; }
.relations col:nth-child(2), .relations col:nth-child(8) { width: 123px; }
.relations col:nth-child(3) { width: 40px; }
.relations col:nth-child(4) { width: 112px; }
.relations col:nth-child(5) { width: 92px; }
.relations col:nth-child(6), .relations col:nth-child(7) { width: 70px; }
.relations col:nth-child(9) { width: 74px; }
.relations col:nth-child(10) { width: 282px; }
.relations col:nth-child(11), .relations col:nth-child(12) { width: 86px; }
.relations .group td { height: 20px; background: #eaf1fa; }
.relations .group td + td { padding-left: 3px; }
.grid tr td.exp { padding: 0 0 0 1px; background: #eaf1fa; border-bottom: 0; }
.grid .group td.exp { border-right: 0; }
.exp button { display: block; width: 14px; height: 16px; background: #f2f2f2; border: 1px solid; border-color: #fff #888 #888 #fff; line-height: 12px; text-align: center; }

.bill-list { background: #eaf1fa; padding-top: 1px; }
.bills th { width: 100px; }

/* context menu over the lists */
.context {
  position: absolute;
  left: 839px;
  top: 178px;
  width: 219px;
  padding: 1px 0;
  background: linear-gradient(90deg, #f4f4f4, #efefef 24px, #fcfcfc 24px);
  border: 1px solid #808080;
  font: 12px/16px "Open Sans", "Noto Sans", sans-serif;
}
.context button { display: flex; align-items: center; gap: 15px; width: 100%; height: 22px; padding-left: 4px; color: #000; }
.context hr { height: 1px; margin: 2px 1px 3px 32px; border: 0; background: #bdbdbd; }
.context .hot { position: relative; background: #b3d7f3; }
.context .hot::before { content: ""; position: absolute; inset: -4px -2px -4px -3px; border: 5px solid #f00; box-shadow: 2px 2px 3px rgba(0, 0, 0, .5), inset 1px 2px 3px rgba(0, 0, 0, .4); }
.context .cursor { position: absolute; left: 66px; top: 9px; width: 12px; height: 24px; }
```
